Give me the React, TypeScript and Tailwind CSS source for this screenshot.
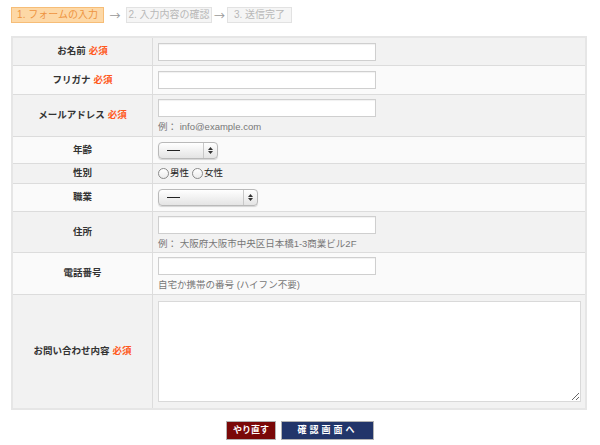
import React from "react";

const font = { fontFamily: '"Liberation Sans", "Noto Sans CJK JP", sans-serif' };

function Req() {
  return <span className="ml-[3px] text-[#ff5a1e] font-bold">必須</span>;
}

function TextInput() {
  return <input type="text" className="block w-[218px] h-[18px] bg-white border border-[#cfcfcf] shadow-[inset_0_1px_1px_rgba(0,0,0,0.06)] outline-none" />;
}

function FakeSelect({ width }: { width: string }) {
  return (
    <div className={`${width} h-[17px] flex rounded-[4px] border border-[#b9b9b9] bg-gradient-to-b from-white to-[#e4e4e4] shadow-[0_1px_1px_rgba(0,0,0,0.15)]`}>
      <div className="flex-1 flex items-center pl-[8px]">
        <span className="block w-[13px] h-[1px] bg-[#222]" />
      </div>
      <div className="w-[14px] border-l border-[#c8c8c8] flex flex-col items-center justify-center gap-[1px]">
        <svg width="5" height="3" viewBox="0 0 5 3"><path d="M0 3 L2.5 0 L5 3Z" fill="#333" /></svg>
        <svg width="5" height="3" viewBox="0 0 5 3"><path d="M0 0 L2.5 3 L5 0Z" fill="#333" /></svg>
      </div>
    </div>
  );
}

function Radio({ label }: { label: string }) {
  return (
    <label className="flex items-center gap-[1px]">
      <span className="w-[11px] h-[11px] rounded-full border border-[#8a8a8a] bg-gradient-to-b from-white to-[#ececec]" />
      <span className="text-[9.5px] text-[#222]">{label}</span>
    </label>
  );
}

function Help({ children }: { children: React.ReactNode }) {
  return <div className="mt-[4px] text-[9.5px] leading-[11px] text-[#777] whitespace-nowrap">{children}</div>;
}

function Arrow({ w }: { w: string }) {
  return <span className={`${w} text-center text-[11px] text-[#999] font-['Noto_Sans_CJK_JP']`}>→</span>;
}

type Row = { label: React.ReactNode; h: string; bg: string; body: React.ReactNode; first?: boolean };

export default function App() {
  const rows: Row[] = [
    { label: <>お名前<Req /></>, h: "h-[27px]", bg: "bg-[#f2f2f2]", body: <TextInput />, first: true },
    { label: <>フリガナ<Req /></>, h: "h-[29px]", bg: "bg-[#fafafa]", body: <TextInput /> },
    {
      label: <>メールアドレス<Req /></>,
      h: "h-[42px]",
      bg: "bg-[#f2f2f2]",
      body: (
        <div>
          <TextInput />
          <Help>例： info@example.com</Help>
        </div>
      ),
    },
    { label: "年齢", h: "h-[27px]", bg: "bg-[#fafafa]", body: <FakeSelect width="w-[60px]" /> },
    {
      label: "性別",
      h: "h-[20px]",
      bg: "bg-[#f2f2f2]",
      body: (
        <div className="flex items-center gap-[3px]">
          <Radio label="男性" />
          <Radio label="女性" />
        </div>
      ),
    },
    { label: "職業", h: "h-[28px]", bg: "bg-[#fafafa]", body: <FakeSelect width="w-[100px]" /> },
    {
      label: "住所",
      h: "h-[41px]",
      bg: "bg-[#f2f2f2]",
      body: (
        <div>
          <TextInput />
          <Help>例： 大阪府大阪市中央区日本橋1-3商業ビル2F</Help>
        </div>
      ),
    },
    {
      label: "電話番号",
      h: "h-[42px]",
      bg: "bg-[#fafafa]",
      body: (
        <div>
          <TextInput />
          <Help>自宅か携帯の番号 (ハイフン不要)</Help>
        </div>
      ),
    },
    {
      label: <>お問い合わせ内容<Req /></>,
      h: "h-[114px]",
      bg: "bg-[#f2f2f2]",
      body: <textarea className="block w-[423px] h-[101px] bg-white border border-[#d9d9d9] outline-none" />,
    },
  ];

  return (
    <div className="w-[600px] h-[445px] bg-white overflow-hidden" style={font}>
      {/* steps */}
      <div className="flex items-center pt-[7px] pl-[11px] text-[10px] leading-none whitespace-nowrap">
        <div className="h-[16px] w-[93px] flex items-center justify-center bg-[#fdd8a6] border border-[#f6bd77] text-[#ee9440]">1. フォームの入力</div>
        <Arrow w="w-[22px]" />
        <div className="h-[16px] w-[86px] flex items-center justify-center bg-[#f5f5f5] border border-[#e2e2e2] text-[#b8b8b8]">2. 入力内容の確認</div>
        <Arrow w="w-[15px]" />
        <div className="h-[16px] w-[65px] flex items-center justify-center bg-[#f5f5f5] border border-[#e2e2e2] text-[#b8b8b8]">3. 送信完了</div>
      </div>

      {/* form table */}
      <div className="ml-[11px] mt-[13px] w-[576px] border-2 border-[#e6e6e6]">
        {rows.map((r, i) => (
          <div key={i} className={`grid grid-cols-[140px_1fr] ${r.h} ${r.bg} ${r.first ? "" : "border-t border-[#dcdcdc]"}`}>
            <div className="flex items-center justify-center border-r border-[#dcdcdc] text-[9.5px] font-bold text-[#333] whitespace-nowrap">{r.label}</div>
            <div className="flex items-center pl-[5px]">{r.body}</div>
          </div>
        ))}
      </div>

      {/* buttons */}
      <div className="flex justify-center gap-[5px] mt-[11px]">
        <button className="w-[50px] h-[19px] bg-[#7a0808] border border-[#b3b3b3] text-white text-[9px] font-bold leading-none">やり直す</button>
        <button className="w-[93px] h-[19px] bg-[#22356a] border border-[#b3b3b3] text-white text-[9px] font-bold leading-none tracking-[3px]">確認画面へ</button>
      </div>
    </div>
  );
}
